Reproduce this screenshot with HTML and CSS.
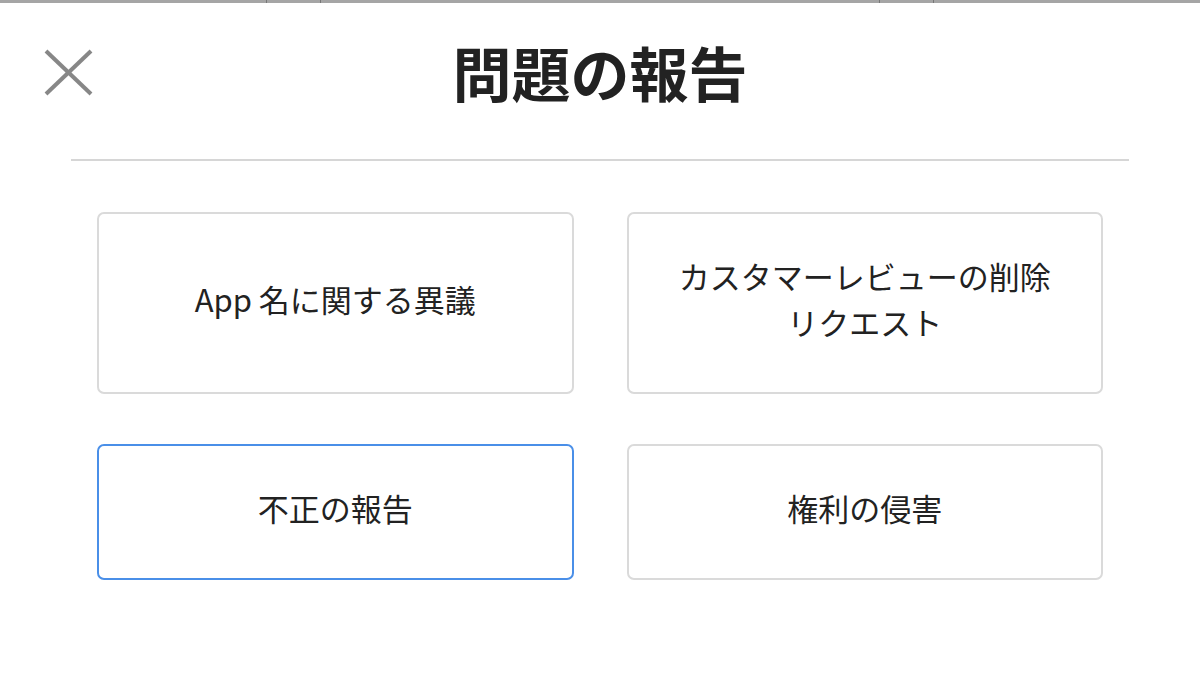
FILE: index.html
```html
<!DOCTYPE html>
<html lang="ja">
<head>
    <meta charset="UTF-8">
    <meta name="viewport" content="width=device-width, initial-scale=1.0">
    <title>問題の報告</title>
    <link rel="stylesheet" href="styles.css">
</head>
<body>
    <div class="topbar">
        <span></span><span class="tick"></span><span></span><span class="tick"></span><span></span><span class="tick"></span><span></span><span class="tick"></span><span></span>
    </div>

    <div class="header">
        <div class="close">
            <svg width="50" height="48" viewBox="0 0 50 48">
                <line x1="3" y1="3" x2="48" y2="46" stroke="#878787" stroke-width="4"/>
                <line x1="48" y1="3" x2="3" y2="46" stroke="#878787" stroke-width="4"/>
            </svg>
        </div>
        <h1>問題の報告</h1>
        <div></div>
    </div>

    <hr class="divider">

    <div class="options">
        <div class="card">App 名に関する異議</div>
        <div class="card">カスタマーレビューの削除<br>リクエスト</div>
        <div class="card selected">不正の報告</div>
        <div class="card">権利の侵害</div>
    </div>
</body>
</html>
```

FILE: styles.css
```css
body {
    font-family: "Noto Sans CJK JP", "Noto Sans", sans-serif;
    margin: 0px;
    background-color: #ffffff;
    color: #222222;
}
.topbar {
    display: grid;
    grid-template-columns: 266px 1px 53px 1px 558px 1px 53px 1px 1fr;
    height: 3px;
    background-color: #a5a5a5;
}
.topbar .tick {
    background-color: #777777;
}
.header {
    display: grid;
    grid-template-columns: 1fr auto 1fr;
    align-items: center;
    height: 136px;
}
.close {
    padding-left: 43px;
    padding-top: 2px;
    display: flex;
}
h1 {
    margin: 0;
    font-size: 59px;
    font-weight: bold;
    line-height: 1;
    color: #222222;
}
.divider {
    border: none;
    height: 2px;
    background-color: #d6d6d6;
    margin: 20px 71px 0 71px;
}
.options {
    display: grid;
    grid-template-columns: 1fr 1fr;
    grid-template-rows: 182px 136px;
    column-gap: 53px;
    row-gap: 50px;
    margin-top: 51px;
    padding: 0 97px;
}
.card {
    display: flex;
    align-items: center;
    justify-content: center;
    text-align: center;
    border: 2px solid #dadada;
    border-radius: 7px;
    font-size: 31px;
    line-height: 46px;
    padding-bottom: 8px;
}
.card.selected {
    border-color: #4a8fe8;
}
```
